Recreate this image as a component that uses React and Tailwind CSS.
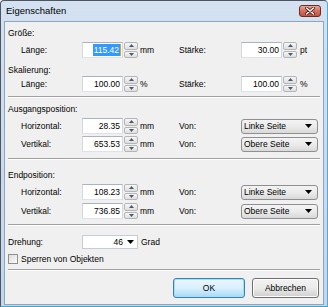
import React from 'react';

const font = { fontFamily: '"Liberation Sans", Arial, sans-serif' };

function Spinner() {
  return (
    <div className="ml-px flex h-4 w-[14px] flex-col gap-px">
      <div className="flex h-[7.5px] items-center justify-center rounded-[2px] border border-[#b5b5b5] bg-gradient-to-b from-[#f7f7f7] to-[#dedede]">
        <svg width="5" height="3" viewBox="0 0 5 3"><path d="M0 3 L2.5 0 L5 3 Z" fill="#4a5a6e" /></svg>
      </div>
      <div className="flex h-[7.5px] items-center justify-center rounded-[2px] border border-[#b5b5b5] bg-gradient-to-b from-[#f7f7f7] to-[#dedede]">
        <svg width="5" height="3" viewBox="0 0 5 3"><path d="M0 0 L2.5 3 L5 0 Z" fill="#4a5a6e" /></svg>
      </div>
    </div>
  );
}

function NumField({ value, selected }) {
  return (
    <div className="flex items-center">
      <div className="flex h-4 w-[41px] items-center justify-end border border-[#abb3bf] border-b-[#dde3ea] border-x-[#d3d9e1] bg-white pr-[1px]">
        {selected ? (
          <>
            <span className="bg-[#3399ff] px-px leading-[12px] text-white">{value}</span>
            <span className="h-[12px] w-px bg-[#e0a020]" />
          </>
        ) : (
          <span className="pr-px">{value}</span>
        )}
      </div>
      <Spinner />
    </div>
  );
}

function Dropdown({ value }) {
  return (
    <div className="flex h-[15px] w-[77px] items-center justify-between rounded-[3px] border border-[#8e8f8f] bg-gradient-to-b from-[#f3f3f3] via-[#ebebeb] to-[#d9d9d9] pl-[2px] pr-[5px]">
      <span>{value}</span>
      <svg width="7" height="4" viewBox="0 0 7 4"><path d="M0 0 L7 0 L3.5 4 Z" fill="#000" /></svg>
    </div>
  );
}

function Sep({ mt }) {
  return <div className={`${mt} h-[2px] border-t border-[#a0a0a0] border-b border-b-white`} />;
}

function FieldRow({ mt, label, value, unit, selected, right }) {
  return (
    <div className={`${mt} flex h-4 items-center pl-[13px]`}>
      <span className="w-[61px]">{label}</span>
      <NumField value={value} selected={selected} />
      <span className="ml-[2px] w-[39px]">{unit}</span>
      {right}
    </div>
  );
}

function RightNum({ label, value, unit }) {
  return (
    <div className="flex items-center">
      <span className="w-[62px]">{label}</span>
      <NumField value={value} />
      <span className="ml-[3px]">{unit}</span>
    </div>
  );
}

function RightVon({ value }) {
  return (
    <div className="flex items-center">
      <span className="w-[62px]">Von:</span>
      <Dropdown value={value} />
    </div>
  );
}

export default function App() {
  return (
    <div style={font} className="h-[307px] w-[328px] overflow-hidden bg-white text-[8.5px] text-black">
      <div className="flex h-full w-full flex-col rounded-t-[4px] border border-[#4d5563] border-b-[#3aa8c8] border-r-[#48b0d0] bg-gradient-to-b from-[#d3e1f1] to-[#c4d6ec] px-[3px] pb-[1px]">
        <div className="flex h-[20px] shrink-0 items-center justify-between pl-[2px] pr-[3px]">
          <span className="text-[9.5px] text-[#000]">Eigenschaften</span>
          <div className="flex h-[12px] w-[22px] items-center justify-center rounded-[3px] border border-[#6b2a24] bg-gradient-to-b from-[#e8a99a] via-[#d2705f] to-[#c2533f]">
            <svg width="10" height="8" viewBox="0 0 10 8">
              <path d="M1.5 1 L8.5 7 M8.5 1 L1.5 7" stroke="#4a1410" strokeWidth="3" strokeLinecap="round" />
              <path d="M1.5 1 L8.5 7 M8.5 1 L1.5 7" stroke="#fff" strokeWidth="1.6" strokeLinecap="round" />
            </svg>
          </div>
        </div>
        <div className="flex flex-1 flex-col border border-[#8fa4bd] bg-[#f0f0f0] pl-[3px] pr-[3px]">
          <div className="mt-[5px] flex h-3 items-center">Größe:</div>
          <FieldRow mt="mt-[3px]" label="Länge:" value="115.42" unit="mm" selected right={<RightNum label="Stärke:" value="30.00" unit="pt" />} />
          <div className="mt-[6px] flex h-3 items-center">Skalierung:</div>
          <FieldRow mt="mt-0" label="Länge:" value="100.00" unit="%" right={<RightNum label="Stärke:" value="100.00" unit="%" />} />
          <Sep mt="mt-[4px]" />
          <div className="mt-[5px] flex h-3 items-center">Ausgangsposition:</div>
          <FieldRow mt="mt-[3px]" label="Horizontal:" value="28.35" unit="mm" right={<RightVon value="Linke Seite" />} />
          <FieldRow mt="mt-[2px]" label="Vertikal:" value="653.53" unit="mm" right={<RightVon value="Obere Seite" />} />
          <Sep mt="mt-[6px]" />
          <div className="mt-[9px] flex h-3 items-center">Endposition:</div>
          <FieldRow mt="mt-[3px]" label="Horizontal:" value="108.23" unit="mm" right={<RightVon value="Linke Seite" />} />
          <FieldRow mt="mt-[3px]" label="Vertikal:" value="736.85" unit="mm" right={<RightVon value="Obere Seite" />} />
          <Sep mt="mt-[5px]" />
          <div className="mt-[8px] flex h-4 items-center">
            <span className="w-[74px]">Drehung:</span>
            <div className="flex h-[14px] w-[56px] items-center justify-end gap-[4px] border border-[#c5ccd6] bg-white pr-[3px]">
              <span>46</span>
              <svg width="7" height="4" viewBox="0 0 7 4"><path d="M0 0 L7 0 L3.5 4 Z" fill="#000" /></svg>
            </div>
            <span className="ml-[3px]">Grad</span>
          </div>
          <div className="mt-[3px] flex h-3 items-center">
            <div className="h-[10px] w-[10px] border border-[#8e8f8f] bg-gradient-to-br from-[#dcdcdc] to-[#fbfbfb]" />
            <span className="ml-[3px]">Sperren von Objekten</span>
          </div>
          <Sep mt="mt-[4px]" />
          <div className="mt-[7px] flex items-center pl-[165px]">
            <div className="flex h-[20px] w-[72px] items-center justify-center rounded-[3px] border border-[#3c7fb1] bg-gradient-to-b from-[#eaf6fd] via-[#d9f0fc] to-[#a7d9f5] shadow-[inset_0_0_0_1px_#9fe0f8]">OK</div>
            <div className="ml-[7px] flex h-[20px] w-[67px] items-center justify-center rounded-[3px] border border-[#707070] bg-gradient-to-b from-[#f2f2f2] via-[#ebebeb] to-[#cfcfcf] shadow-[inset_0_0_0_1px_#fcfcfc]">Abbrechen</div>
          </div>
        </div>
      </div>
    </div>
  );
}
